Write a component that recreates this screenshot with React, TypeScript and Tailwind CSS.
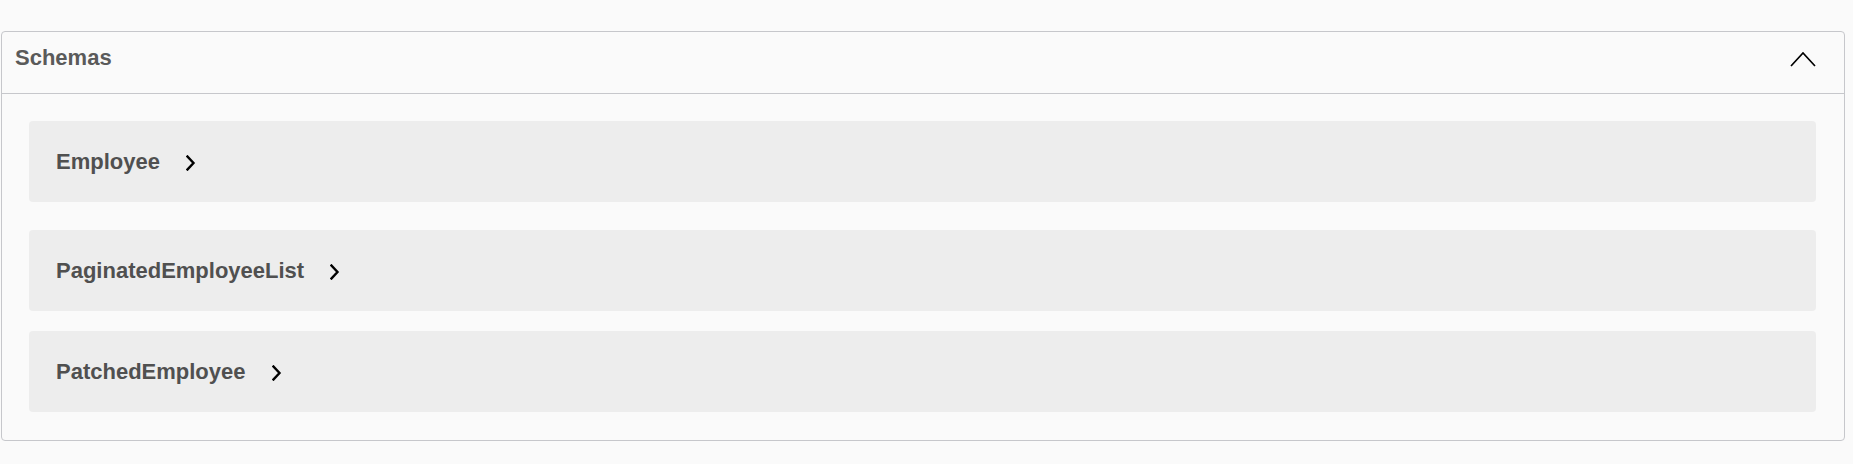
import { useState } from "react";

type Schema = { name: string; gap: string };

const SCHEMAS: Schema[] = [
    { name: "Employee", gap: "mt-[27px]" },
    { name: "PaginatedEmployeeList", gap: "mt-[28px]" },
    { name: "PatchedEmployee", gap: "mt-[20px]" },
];

function ChevronRight() {
    return (
        <svg width="10" height="16" viewBox="0 0 10 16" className="ml-[26px] mt-[3px] shrink-0">
            <polyline points="1.5,1.5 7.5,8 1.5,14.5" fill="none" stroke="#000" strokeWidth="2.4" strokeLinecap="square" />
        </svg>
    );
}

function ChevronUp() {
    return (
        <svg width="26" height="16" viewBox="0 0 26 16" className="shrink-0 translate-y-[1.5px]">
            <polyline points="1,14.5 13,1.5 25,14.5" fill="none" stroke="#000" strokeWidth="1.7" />
        </svg>
    );
}

export default function App() {
    const [open, setOpen] = useState(true);
    return (
        <div
            className="min-h-[464px] bg-[#fafafa] pt-[31px] pl-[1px] pr-[8px]"
            style={{ fontFamily: '"Liberation Sans", Arial, sans-serif' }}
        >
            <section className="border border-[#c6c7cb] rounded-[4px] bg-[#fafafa]">
                {/* header */}
                <button
                    onClick={() => setOpen(!open)}
                    className="flex w-full h-[62px] items-start justify-between pl-[13px] pr-[28px] pt-[13px] border-b border-[#c6c7cb]"
                >
                    <div className="flex w-full items-center justify-between h-[25px]">
                        <span className="text-[22px] leading-[25px] font-bold text-[#5a5a5a]">Schemas</span>
                        <ChevronUp />
                    </div>
                </button>

                {open && (
                    <div className="flex flex-col pb-[28px]">
                        {SCHEMAS.map((s) => (
                            <div
                                key={s.name}
                                className={`${s.gap} ml-[27px] mr-[28px] h-[81px] rounded-[4px] bg-[#ededed] flex items-center pl-[27px]`}
                            >
                                <span className="text-[22px] leading-[25px] font-bold text-[#505050]">{s.name}</span>
                                <ChevronRight />
                            </div>
                        ))}
                    </div>
                )}
            </section>
        </div>
    );
}
